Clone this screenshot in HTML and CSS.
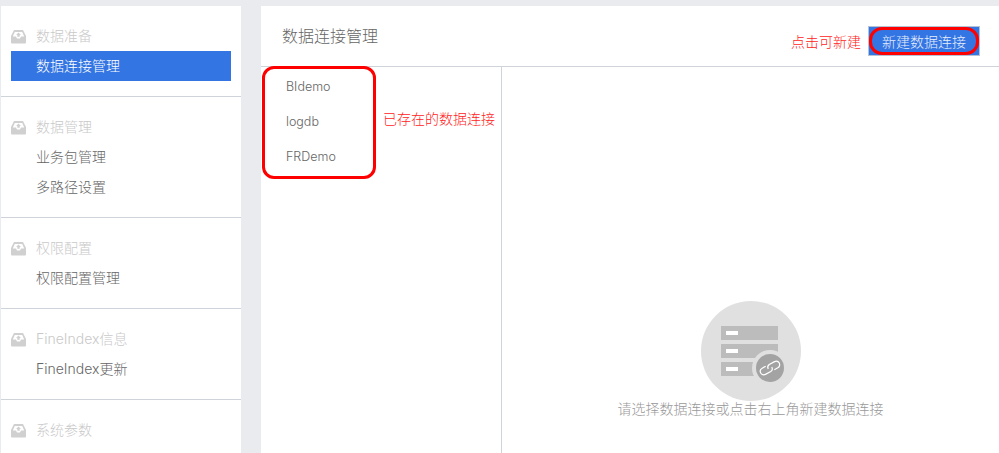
FILE: index.html
```html
<!DOCTYPE html>
<html lang="zh-CN">
<head>
    <meta charset="UTF-8">
    <title>数据连接管理</title>
    <link rel="stylesheet" href="styles.css">
</head>
<body>
    <svg class="sprite" width="0" height="0">
        <symbol id="tray" viewBox="0 0 15 15">
            <path fill="#d0d0d0" d="M3 1h9l3 6v6.5a1 1 0 0 1-1 1H1a1 1 0 0 1-1-1V7z"/>
            <path fill="#fff" d="M3.8 3h7.4l2 4.6H10L9 9.6H6L5 7.6H1.800z"/>
            <path fill="#d0d0d0" d="M7.500 3.600 10 6H8.700v1.800H6.300V6H5z"/>
        </symbol>
    </svg>

    <aside class="sidebar">
        <section class="group">
            <div class="group-title"><svg class="tray"><use href="#tray"/></svg>数据准备</div>
            <div class="item active">数据连接管理</div>
        </section>
        <section class="group">
            <div class="group-title"><svg class="tray"><use href="#tray"/></svg>数据管理</div>
            <div class="item">业务包管理</div>
            <div class="item">多路径设置</div>
        </section>
        <section class="group">
            <div class="group-title"><svg class="tray"><use href="#tray"/></svg>权限配置</div>
            <div class="item">权限配置管理</div>
        </section>
        <section class="group">
            <div class="group-title"><svg class="tray"><use href="#tray"/></svg>FineIndex信息</div>
            <div class="item">FineIndex更新</div>
        </section>
        <section class="group">
            <div class="group-title"><svg class="tray"><use href="#tray"/></svg>系统参数</div>
        </section>
    </aside>

    <main class="main">
        <header class="header">
            <h1 class="page-title">数据连接管理</h1>
            <span class="note new-note">点击可新建</span>
            <button class="new-btn"><span class="new-btn-ring">新建数据连接</span></button>
        </header>
        <div class="content">
            <div class="conn-list">
                <div class="conn">BIdemo</div>
                <div class="conn">logdb</div>
                <div class="conn">FRDemo</div>
                <div class="conn-mark"></div>
                <span class="note conn-note">已存在的数据连接</span>
            </div>
            <div class="empty">
                <svg class="empty-pic" width="100" height="100" viewBox="0 0 100 100">
                    <circle cx="50" cy="50" r="50" fill="#e0e0e0"/>
                    <rect x="20" y="25" width="57" height="14" fill="#bcbcbc"/>
                    <rect x="20" y="43" width="57" height="14" fill="#bcbcbc"/>
                    <rect x="20" y="61" width="57" height="14" fill="#bcbcbc"/>
                    <rect x="25" y="30" width="12" height="4" fill="#fff"/>
                    <rect x="25" y="48" width="12" height="4" fill="#fff"/>
                    <rect x="25" y="66" width="12" height="4" fill="#fff"/>
                    <circle cx="69" cy="67" r="18" fill="#e0e0e0"/>
                    <circle cx="69" cy="67" r="14" fill="#a3a3a3"/>
                    <g fill="none" stroke="#fff" stroke-width="1.2" transform="rotate(-28 69 67)">
                        <path d="M66 63.500h-4a3.500 3.500 0 0 0 0 7h6a3.500 3.500 0 0 0 3-3.500"/>
                        <path d="M72 70.500h4a3.500 3.500 0 0 0 0-7h-6a3.500 3.500 0 0 0-3 3.500"/>
                    </g>
                </svg>
                <p class="empty-text">请选择数据连接或点击右上角新建数据连接</p>
            </div>
        </div>
    </main>
</body>
</html>
```

FILE: styles.css
```css
html, body {
    height: 100%;
}
body {
    margin: 0;
    padding: 6px 0 0 1px;
    box-sizing: border-box;
    display: flex;
    gap: 20px;
    overflow: hidden;
    background: #e9ebef;
    font-family: "Inter", "Noto Sans CJK SC", sans-serif;
    font-size: 14px;
    font-weight: 300;
    color: #666;
}
.sprite {
    display: none;
}
.sidebar {
    width: 240px;
    flex: none;
    background: #fff;
}
.group {
    padding: 15px 10px;
    border-bottom: 1px solid #cfd3da;
}
.group-title, .item {
    height: 30px;
    line-height: 30px;
}
.group-title {
    display: flex;
    align-items: center;
    color: #c9c9c9;
}
.tray {
    width: 15px;
    height: 15px;
    margin-right: 10px;
}
.item {
    padding-left: 25px;
}
.item.active {
    background: #3375e3;
    color: #fff;
}
.main {
    flex: 1;
    display: flex;
    flex-direction: column;
    background: #fff;
}
.header {
    height: 60px;
    flex: none;
    display: flex;
    align-items: center;
    padding: 0 19px 0 21px;
    border-bottom: 1px solid #cfd3da;
}
.page-title {
    margin: -2px auto 0 0;
    font-size: 16px;
    font-weight: 300;
}
.note {
    color: #f22;
}
.new-note {
    margin: 10px 7px 0 0;
}
.new-btn {
    width: 112px;
    height: 30px;
    margin-top: 10px;
    padding: 0;
    border: 1px solid #b5c1d4;
    background: #3375e3;
    font: inherit;
    color: #e8effb;
}
.new-btn-ring {
    display: block;
    height: 100%;
    box-sizing: border-box;
    line-height: 24px;
    border: 3px solid #f00;
    border-radius: 13px;
}
.content {
    flex: 1;
    display: flex;
    min-height: 0;
}
.conn-list {
    position: relative;
    width: 241px;
    flex: none;
    box-sizing: border-box;
    padding-top: 2px;
    border-right: 1px solid #cfd3da;
}
.conn {
    height: 35px;
    line-height: 35px;
    padding-left: 25px;
    font-size: 12.5px;
    color: #666;
}
.conn-mark {
    position: absolute;
    left: 1px;
    top: -1px;
    width: 114px;
    height: 113px;
    box-sizing: border-box;
    border: 3px solid #f00;
    border-radius: 12px;
}
.conn-note {
    position: absolute;
    left: 122px;
    top: 41px;
}
.empty {
    flex: 1;
    display: flex;
    flex-direction: column;
    align-items: center;
    padding-top: 234px;
}
.empty-pic {
    flex: none;
}
.empty-text {
    margin: -2px 0 0;
    line-height: 20px;
    color: #999;
}
```
